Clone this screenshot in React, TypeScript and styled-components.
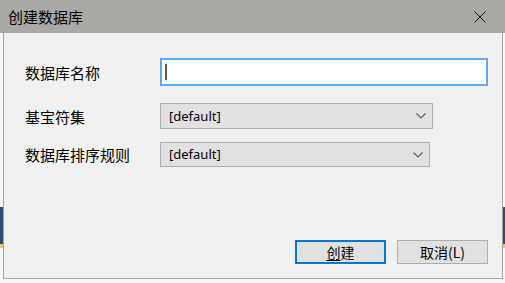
import React from "react";
import styled, { createGlobalStyle } from "styled-components";

const Global = createGlobalStyle`
  html, body { margin: 0; padding: 0; background: #f8f8f8; }
  body { font-family: "Noto Sans CJK SC", "Noto Sans", sans-serif; }
`;

const Screen = styled.div`
  width: 505px;
  height: 283px;
  overflow: hidden;
  display: flex;
  flex-direction: column;
  background:
    linear-gradient(to bottom,
      #f8f8f8 0px, #f8f8f8 207px,
      #2f4a76 207px, #2f4a76 244px,
      #e6c77a 244px, #e6c77a 248px,
      #f8f8f8 248px);
`;

const TitleBar = styled.div`
  height: 33px;
  flex: none;
  background: #aaa9a4;
  display: flex;
  align-items: center;
  justify-content: space-between;
  padding: 0 19px 0 8px;
`;

const Title = styled.span`
  font-family: "Noto Sans CJK SC", sans-serif;
  font-size: 15px;
  color: #000;
  line-height: 1;
  margin-top: -1px;
`;

const CloseIcon = styled.svg`
  width: 12px;
  height: 12px;
  display: block;
`;

const Frame = styled.div`
  margin: 0 2px 0 3px;
  height: 246px;
  box-sizing: border-box;
  border: 1px solid #a3a3a3;
  border-top: none;
  background: #f0f0f0;
  display: flex;
  flex-direction: column;
  padding: 25px 14px 14px 21px;
`;

const Form = styled.div`
  flex: 1;
  display: flex;
  flex-direction: column;
`;

const Row = styled.div<{ $gap: number }>`
  display: flex;
  align-items: center;
  margin-top: ${(p) => p.$gap}px;
`;

const Label = styled.label`
  width: 135px;
  flex: none;
  font-family: "Noto Sans CJK SC", sans-serif;
  font-size: 15px;
  color: #000;
  line-height: 1;
`;

const TextBox = styled.div`
  width: 329px;
  height: 28px;
  box-sizing: border-box;
  border: 2px solid #5aa6e8;
  background: #fff;
  display: flex;
  align-items: center;
  padding-left: 3px;
`;

const Caret = styled.span`
  width: 2px;
  height: 16px;
  background: #5a5a5a;
`;

const Select = styled.div<{ $w: number; $h: number }>`
  width: ${(p) => p.$w}px;
  height: ${(p) => p.$h}px;
  box-sizing: border-box;
  border: 1px solid #adadad;
  background: #e1e1e1;
  display: flex;
  align-items: center;
  justify-content: space-between;
  padding: 0 5px 0 8px;
`;

const SelectText = styled.span`
  font-family: "Noto Sans", "Segoe UI", sans-serif;
  font-size: 13px;
  color: #000;
  line-height: 1;
`;

const Chevron = styled.svg`
  width: 10px;
  height: 6px;
  display: block;
  margin-right: 1px;
`;

const Footer = styled.div`
  display: flex;
  justify-content: flex-end;
  gap: 11px;
`;

const Button = styled.button<{ $primary?: boolean }>`
  width: 91px;
  height: 24px;
  box-sizing: border-box;
  border: ${(p) => (p.$primary ? "2px solid #0078d7" : "1px solid #adadad")};
  background: #e1e1e1;
  font-family: "Noto Sans CJK SC", sans-serif;
  font-size: 14px;
  color: #000;
  padding: 0;
  line-height: 1;
  display: flex;
  align-items: center;
  justify-content: center;
`;

const Mnemonic = styled.span`
  text-decoration: underline;
  text-underline-offset: 2px;
`;

const ChevronDown = () => (
  <Chevron viewBox="0 0 10 6">
    <polyline points="0.5,0.5 5,5 9.5,0.5" fill="none" stroke="#606060" strokeWidth="1.2" />
  </Chevron>
);

export default function App() {
  return (
    <>
      <Global />
      <Screen>
        <TitleBar>
          <Title>创建数据库</Title>
          <CloseIcon viewBox="0 0 12 12">
            <path d="M0.5 0.5 L11.5 11.5 M11.5 0.5 L0.5 11.5" stroke="#111" strokeWidth="1" fill="none" />
          </CloseIcon>
        </TitleBar>
        <Frame>
          <Form>
            <Row $gap={0}>
              <Label>数据库名称</Label>
              <TextBox>
                <Caret />
              </TextBox>
            </Row>
            <Row $gap={17}>
              <Label>基宝符集</Label>
              <Select $w={273} $h={26}>
                <SelectText>[default]</SelectText>
                <ChevronDown />
              </Select>
            </Row>
            <Row $gap={13}>
              <Label>数据库排序规则</Label>
              <Select $w={270} $h={25}>
                <SelectText>[default]</SelectText>
                <ChevronDown />
              </Select>
            </Row>
          </Form>
          <Footer>
            <Button $primary>
              <Mnemonic>创</Mnemonic>建
            </Button>
            <Button>取消(L)</Button>
          </Footer>
        </Frame>
      </Screen>
    </>
  );
}
